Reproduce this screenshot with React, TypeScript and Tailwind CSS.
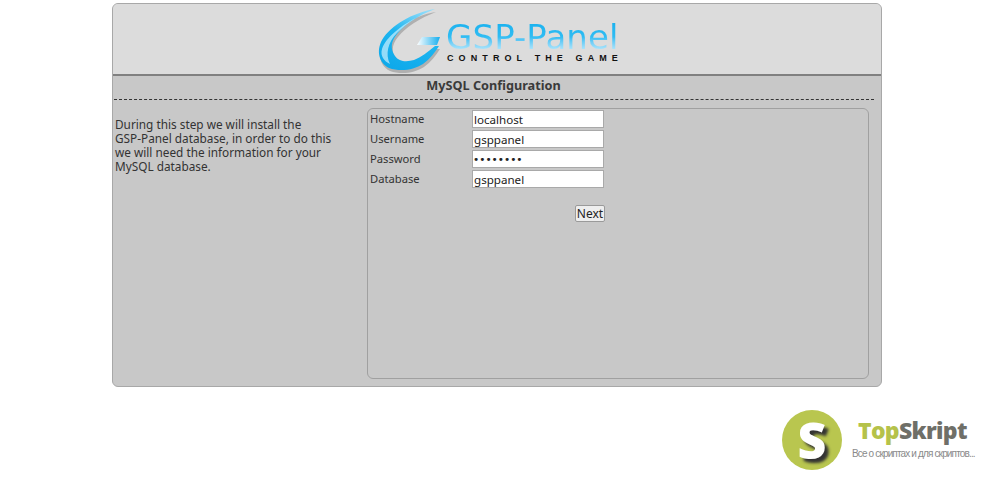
const font = { fontFamily: '"Noto Sans", sans-serif' };

function Swoosh() {
  const d = "M63 5 C40 9 19 21 10 36 C4 47 7 59 17 64 C28 68 42 66 51 60 C58 55 63 48 67 42 L63 42 C56 48 49 53 42 56 C35 58 27 58 23 52 C18 45 19 37 25 30 C33 20 47 11 63 5 Z";
  return (
    <svg width="80" height="70" viewBox="0 0 80 70" className="shrink-0">
      <defs>
        <linearGradient id="sw" x1="0.7" y1="0" x2="0.3" y2="1">
          <stop offset="0" stopColor="#8fdcfa" />
          <stop offset="0.45" stopColor="#1db5f0" />
          <stop offset="1" stopColor="#0ea9ea" />
        </linearGradient>
        <linearGradient id="bar" x1="0" y1="0" x2="1" y2="0">
          <stop offset="0" stopColor="#ffffff" />
          <stop offset="1" stopColor="#16aeee" />
        </linearGradient>
      </defs>
      <path d={d} fill="#000" opacity="0.2" transform="translate(1 3)" />
      <path d={d} fill="url(#sw)" />
      <path d="M44 14 C30 21 14 33 10 45 C8 52 12 57 18 60 C13 50 16 38 25 29 C31 23 37 18 44 14 Z" fill="#d9f5ff" opacity="0.65" />
      <path d="M45 41 L50 33 L68 33 L65 41 Z" fill="url(#bar)" />
    </svg>
  );
}

function Row({ label, value, type = "text" }: { label: string; value: string; type?: string }) {
  return (
    <div className="flex h-5 items-center">
      <span className="w-[102px] text-[11.2px] text-[#333]">{label}</span>
      <input
        readOnly
        type={type}
        value={value}
        className={
          type === "password"
            ? "h-[18px] w-[132px] border border-[#a9a9a9] bg-white px-0 text-[10.5px] text-[#222] outline-none"
            : "h-[18px] w-[132px] border border-[#a9a9a9] bg-white px-[1px] text-[11.6px] text-[#222] outline-none"
        }
        style={type === "password" ? { fontFamily: '"DejaVu Sans", sans-serif' } : font}
      />
    </div>
  );
}

export default function App() {
  return (
    <div className="relative h-[477px] w-[984px] overflow-hidden bg-white pl-[112px] pt-[3px]" style={font}>
      <div className="flex h-[384px] w-[770px] flex-col overflow-hidden rounded-[6px] border border-[#a8a8a8] bg-[#c8c8c8]">
        <div className="flex h-[72px] shrink-0 items-start overflow-hidden border-b-2 border-[#808080] bg-[#dcdcdc] pl-[259px]">
          <Swoosh />
          <div className="-ml-[6px] flex w-[180px] flex-col pt-[17px]">
            <span
              className="whitespace-nowrap bg-gradient-to-b from-[#16b0ee] via-[#30bdf3] to-[#c5effd] bg-clip-text text-[34px] leading-[32px] tracking-[0.1px] text-transparent"
              style={{ fontFamily: '"DejaVu Sans", sans-serif' }}
            >
              GSP-Panel
            </span>
            <span
              className="pl-[1px] whitespace-nowrap text-[9px] font-bold leading-[10px] tracking-[5.1px] text-[#111]"
              style={{ fontFamily: '"Liberation Sans", sans-serif' }}
            >
              CONTROL THE GAME
            </span>
          </div>
        </div>
        <h1 className="mr-[7px] text-center text-[12.7px] font-bold leading-[18px] text-[#3a3a3a]">
          MySQL Configuration
        </h1>
        <div className="ml-[1px] mr-[7px] mt-[5px] border-t border-dashed border-[#333]" />
        <div className="flex flex-1 pl-[2px] pr-[12px] pt-[8px]">
          <p className="mt-[9px] w-[252px] shrink-0 text-[11.8px] leading-[14px] text-[#333]">
            During this step we will install the
            <br />
            GSP-Panel database, in order to do this
            <br />
            we will need the information for your
            <br />
            MySQL database.
          </p>
          <div className="h-[271px] flex-1 rounded-[6px] border border-[#a0a0a0] pl-[2px]">
            <Row label="Hostname" value="localhost" />
            <Row label="Username" value="gsppanel" />
            <Row label="Password" value="gsppanel" type="password" />
            <Row label="Database" value="gsppanel" />
            <div className="mt-[16px] flex w-[235px] justify-end">
              <button
                className="h-[17px] w-[30px] rounded-[2px] border border-[#9a9a9a] bg-[#eeeeee] text-[12px] leading-[15px] text-[#222]"
                style={font}
              >
                Next
              </button>
            </div>
          </div>
        </div>
      </div>

      <div className="absolute left-[782px] top-[410px] flex">
        <div
          className="flex h-[60px] w-[60px] items-center justify-center rounded-full bg-[#b9c64f] text-[50px] font-extrabold leading-none text-white"
          style={{ fontFamily: '"Open Sans", sans-serif', textShadow: "4px 4px 3px #333" }}
        >
          S
        </div>
        <div className="ml-[10px] pt-[7px]">
          <div
            className="pl-[6px] text-[23px] font-extrabold leading-[26px] tracking-[-0.7px]"
            style={{ fontFamily: '"Open Sans", sans-serif' }}
          >
            <span className="text-[#b5c24a]">Top</span>
            <span className="text-[#6f6f68]">Skript</span>
          </div>
          <div
            className="mt-[5px] whitespace-nowrap text-[10px] leading-[12px] tracking-[-0.85px] text-[#8a8a8a]"
            style={{ fontFamily: '"Liberation Sans", sans-serif' }}
          >
            Все о скриптах и для скриптов...
          </div>
        </div>
      </div>
    </div>
  );
}
